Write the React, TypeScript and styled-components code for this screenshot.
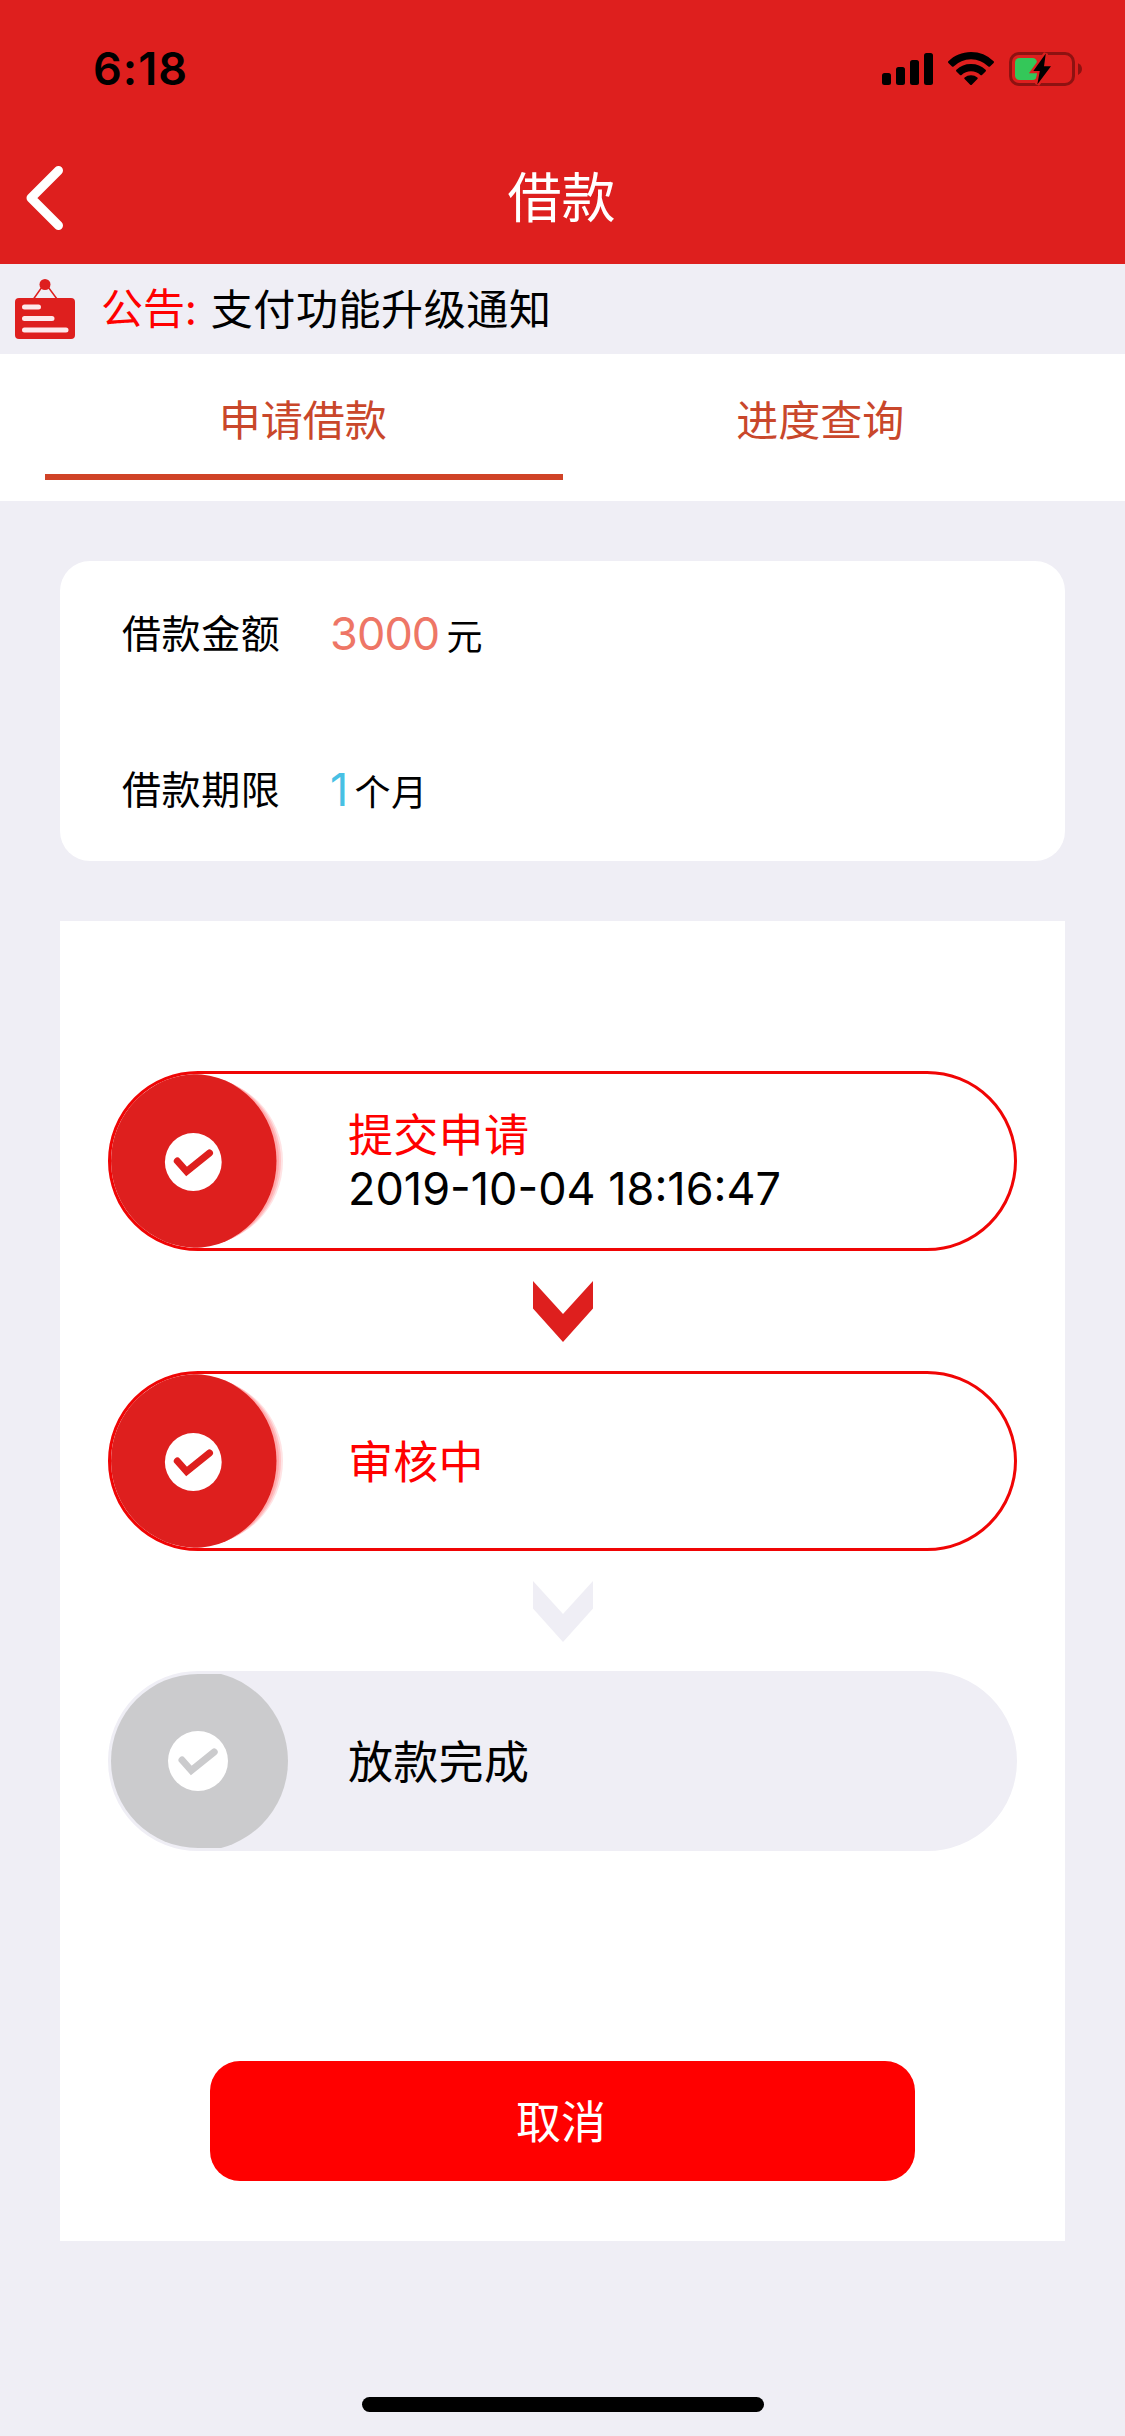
import React from "react";
import styled, { createGlobalStyle } from "styled-components";

const RED = "#de1f1e";
const PURE_RED = "#ff0000";
const PAGE = "#efeef5";
const HAN = '"Noto Sans CJK SC", sans-serif';
const LATIN = 'Inter, "Noto Sans CJK SC", sans-serif';

const GlobalStyle = createGlobalStyle`
  *, *::before, *::after { box-sizing: border-box; }
  html, body { margin: 0; background: ${PAGE}; }
  body { font-family: ${HAN}; color: #000; }
`;

const Screen = styled.div`
  display: flex;
  flex-direction: column;
  width: 1125px;
  height: 2436px;
  background: ${PAGE};
  overflow: hidden;
`;

const StatusBar = styled.div`
  display: flex;
  justify-content: space-between;
  height: 132px;
  padding: 52px 43px 0 93px;
  background: ${RED};
`;

const Clock = styled.span`
  height: 34px;
  font: 600 45px/34px ${LATIN};
  letter-spacing: 1px;
`;

const StatusIcons = styled.div`
  display: flex;
  gap: 15px;
  height: 34px;
`;

const NavBar = styled.header`
  display: grid;
  grid-template-columns: 200px 1fr 202px;
  align-items: center;
  height: 132px;
  background: ${RED};
`;

const BackButton = styled.button`
  display: flex;
  padding: 0 0 0 25px;
  border: 0;
  background: none;
`;

const Title = styled.h1`
  margin: 0;
  padding-bottom: 7px;
  text-align: center;
  font: 400 54px/66px ${HAN};
  color: #fff;
`;

const Notice = styled.section`
  display: flex;
  align-items: center;
  height: 90px;
  padding-left: 15px;
`;

const NoticeLabel = styled.span`
  margin-left: 26px;
  padding-bottom: 6px;
  font: 400 42px/60px ${HAN};
  color: ${PURE_RED};
`;

const NoticeText = styled.span`
  margin-left: 14px;
  padding-bottom: 4px;
  font: 400 42px/60px ${HAN};
  letter-spacing: 0.6px;
`;

const Tabs = styled.nav`
  display: grid;
  grid-template-columns: 1fr 1fr;
  height: 147px;
  padding: 0 45px 21px;
  background: #fff;
`;

const Tab = styled.button<{ $active?: boolean }>`
  padding: 37px 2px 29px 0;
  border: 0;
  border-bottom: 6px solid ${(p) => (p.$active ? "#d04327" : "transparent")};
  background: none;
  font: 400 42px/54px ${HAN};
  color: #c9472b;
`;

const LoanCard = styled.section`
  display: flex;
  flex-direction: column;
  gap: 96px;
  height: 300px;
  margin: 60px 60px 0;
  padding: 40px 62px;
  border-radius: 30px;
  background: #fff;
`;

const LoanRow = styled.div`
  display: grid;
  grid-template-columns: 208px auto auto 1fr;
  height: 60px;
`;

const LoanLabel = styled.span`
  font: 400 39px/60px ${HAN};
  letter-spacing: 0.6px;
`;

const LoanValue = styled.span<{ $color: string }>`
  padding-top: 3px;
  font: 400 45px/60px ${LATIN};
  letter-spacing: -0.9px;
  color: ${(p) => p.$color};
`;

const LoanUnit = styled.span`
  padding: 3px 0 0 7px;
  font: 400 36px/60px ${HAN};
  letter-spacing: 0.6px;
`;

const Progress = styled.section`
  display: flex;
  flex-direction: column;
  align-items: center;
  height: 1320px;
  margin: 60px 60px 0;
  padding-top: 150px;
  background: #fff;
`;

const Step = styled.div<{ $done?: boolean }>`
  display: flex;
  width: 909px;
  height: 180px;
  border: 3px solid ${(p) => (p.$done ? "#f00505" : PAGE)};
  border-radius: 90px;
  background: ${(p) => (p.$done ? "#fff" : PAGE)};
  overflow: hidden;
`;

const StepBody = styled.div`
  display: flex;
  flex-direction: column;
  justify-content: center;
  margin-left: 57px;
  padding-bottom: 4px;
`;

const StepName = styled.span<{ $done?: boolean }>`
  font: 400 45px/53px ${HAN};
  letter-spacing: 0.3px;
  color: ${(p) => (p.$done ? PURE_RED : "#000")};
`;

const StepTime = styled.span`
  height: 53px;
  padding-top: 3px;
  font: 400 45px/53px ${LATIN};
`;

const Arrow = styled.svg`
  width: 60px;
  height: 61px;
  margin: 30px 0 29px;
`;

const BadgeSvg = styled.svg`
  flex: none;
  width: 180px;
  height: 174px;
`;

const CancelButton = styled.button`
  width: 705px;
  height: 120px;
  margin-top: 210px;
  padding: 0 3px 2px 0;
  border: 0;
  border-radius: 30px;
  background: ${PURE_RED};
  font: 400 45px/60px ${HAN};
  color: #fff;
`;

const HomeIndicator = styled.div`
  width: 402px;
  height: 15px;
  margin: auto auto 24px;
  border-radius: 8px;
  background: #000;
`;

const SignalIcon = () => (
  <svg width="51" height="34" viewBox="0 0 51 34">
    <rect x="0" y="21" width="9" height="12" rx="2.5" />
    <rect x="14" y="15" width="9" height="18" rx="2.5" />
    <rect x="28" y="8" width="9" height="25" rx="2.5" />
    <rect x="42" y="1" width="9" height="32" rx="2.5" />
  </svg>
);

const WifiIcon = () => (
  <svg width="46" height="34" viewBox="0 0 46 34">
    <path d="M23 0C14.2 0 6.200 3.500 .4 9.200a1.200 1.200 0 0 0 0 1.700L4 14.500a1.200 1.200 0 0 0 1.600 0A25 25 0 0 1 23 7.200a25 25 0 0 1 17.400 7.300 1.200 1.200 0 0 0 1.600 0l3.600-3.600a1.200 1.200 0 0 0 0-1.700A32.500 32.500 0 0 0 23 0z" />
    <path d="M23 12a21 21 0 0 0-14.600 5.700 1.200 1.200 0 0 0 0 1.700l3.600 3.500a1.200 1.200 0 0 0 1.600 0 13.800 13.800 0 0 1 18.800 0 1.200 1.200 0 0 0 1.600 0l3.600-3.500a1.200 1.200 0 0 0 0-1.700A21 21 0 0 0 23 12z" />
    <path d="M23 23.200a10 10 0 0 0-6.400 2.200 1.200 1.200 0 0 0 0 1.700l5.600 5.600a1.200 1.200 0 0 0 1.600 0l5.600-5.600a1.200 1.200 0 0 0 0-1.700A10 10 0 0 0 23 23.200z" />
  </svg>
);

const BatteryIcon = () => (
  <svg width="73" height="34" viewBox="0 0 73 34">
    <rect x="1.500" y="1.500" width="63" height="31" rx="8.500" fill="none" stroke="#8e1211" strokeWidth="3" />
    <path d="M69 11.300c2.500 1 4 3.200 4 5.800s-1.500 4.800-4 5.800z" fill="#8e1211" />
    <rect x="6" y="6" width="22" height="22" rx="4.500" fill="#34c759" />
    <path d="M36.800 1.500 24.300 19h6.500L28.300 32.500 42 14.200h-7z" fill="#000" stroke={RED} strokeWidth="4.500" paintOrder="stroke" />
  </svg>
);

const BackIcon = () => (
  <svg width="38" height="64" viewBox="0 0 38 64">
    <path d="M33.500 4.500 6 32l27.500 27.500" fill="none" stroke="#fff" strokeWidth="9" strokeLinecap="round" strokeLinejoin="round" />
  </svg>
);

const BoardIcon = () => (
  <svg width="60" height="60" viewBox="0 0 60 60">
    <path d="M18.500 20 28 6.500h4L42 20" fill="none" stroke={RED} strokeWidth="1.500" />
    <circle cx="30" cy="5.500" r="5.500" fill={RED} />
    <rect x="0" y="19" width="60" height="41" rx="4" fill={RED} />
    <path d="M9.500 28h14M9.500 39.500h27.500M9.500 51h41.500" stroke="#fde9ec" strokeWidth="5" strokeLinecap="round" />
  </svg>
);

const CheckMark = ({ x, y, color }: { x: number; y: number; color: string }) => (
  <path
    transform={`translate(${x} ${y})`}
    d="M-16-1-6.700 9.500 16.200-9"
    fill="none"
    stroke={color}
    strokeWidth="7"
    strokeLinecap="round"
    strokeLinejoin="miter"
  />
);

const DoneBadge = () => (
  <BadgeSvg viewBox="0 0 180 174">
    <ellipse cx="88" cy="87" rx="84" ry="84" fill="#ffe3e4" />
    <ellipse cx="86.500" cy="87" rx="83.500" ry="85" fill="#ffc4c6" />
    <ellipse cx="84.500" cy="87" rx="83.500" ry="86" fill="#ffa9ab" />
    <ellipse cx="82.500" cy="87" rx="83" ry="87" fill={RED} />
    <ellipse cx="82.300" cy="88" rx="28.400" ry="29" fill="#fff" />
    <CheckMark x={82.3} y={88} color={RED} />
  </BadgeSvg>
);

const PendingBadge = () => (
  <BadgeSvg viewBox="0 0 180 174">
    <circle cx="87" cy="87" r="90" fill="#cbcbcd" />
    <circle cx="87" cy="87" r="30" fill="#fff" />
    <CheckMark x={87} y={87} color="#cbcbcd" />
  </BadgeSvg>
);

const StepArrow = ({ color }: { color: string }) => (
  <Arrow viewBox="0 0 60 61">
    <path d="M0 0 30 33 60 0V27.500L30 61 0 27.500z" fill={color} />
  </Arrow>
);

export default function App() {
  return (
    <Screen>
      <GlobalStyle />
      <StatusBar>
        <Clock>6:18</Clock>
        <StatusIcons>
          <SignalIcon />
          <WifiIcon />
          <BatteryIcon />
        </StatusIcons>
      </StatusBar>
      <NavBar>
        <BackButton aria-label="返回">
          <BackIcon />
        </BackButton>
        <Title>借款</Title>
      </NavBar>
      <Notice>
        <BoardIcon />
        <NoticeLabel>公告:</NoticeLabel>
        <NoticeText>支付功能升级通知</NoticeText>
      </Notice>
      <Tabs>
        <Tab $active>申请借款</Tab>
        <Tab>进度查询</Tab>
      </Tabs>
      <LoanCard>
        <LoanRow>
          <LoanLabel>借款金额</LoanLabel>
          <LoanValue $color="#ee7666">3000</LoanValue>
          <LoanUnit>元</LoanUnit>
        </LoanRow>
        <LoanRow>
          <LoanLabel>借款期限</LoanLabel>
          <LoanValue $color="#48c0e4">1</LoanValue>
          <LoanUnit>个月</LoanUnit>
        </LoanRow>
      </LoanCard>
      <Progress>
        <Step $done>
          <DoneBadge />
          <StepBody>
            <StepName $done>提交申请</StepName>
            <StepTime>2019-10-04 18:16:47</StepTime>
          </StepBody>
        </Step>
        <StepArrow color={RED} />
        <Step $done>
          <DoneBadge />
          <StepBody>
            <StepName $done>审核中</StepName>
          </StepBody>
        </Step>
        <StepArrow color={PAGE} />
        <Step>
          <PendingBadge />
          <StepBody>
            <StepName>放款完成</StepName>
          </StepBody>
        </Step>
        <CancelButton>取消</CancelButton>
      </Progress>
      <HomeIndicator />
    </Screen>
  );
}
